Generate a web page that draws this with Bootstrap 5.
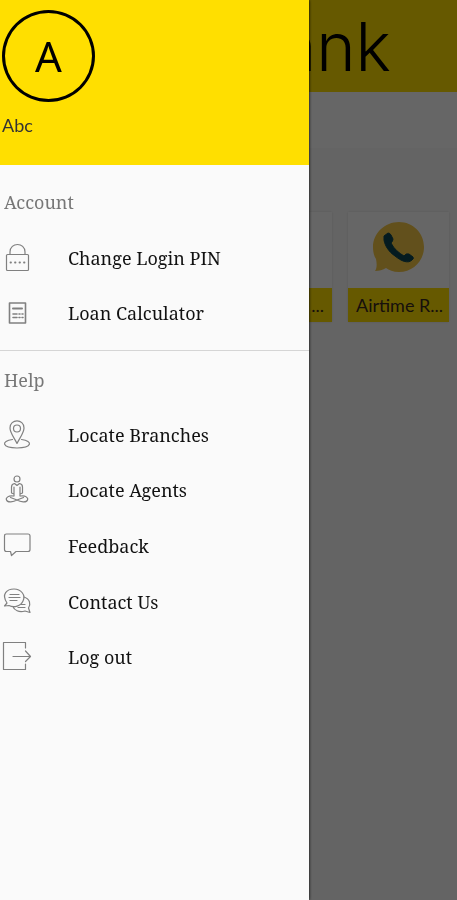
<!DOCTYPE html>
<html lang="en">
<head>
<meta charset="utf-8">
<meta name="viewport" content="width=device-width, initial-scale=1">
<title>Account menu</title>
<link href="https://cdn.jsdelivr.net/npm/bootstrap@5.3.0/dist/css/bootstrap.min.css" rel="stylesheet">
<style>
  body { background: #fafafa; font-family: Lato, "Open Sans", sans-serif; color: #000; }
  .brand-bar { background: #ffdf00; height: 92px; padding-right: 66px; }
  .brand-name { font: 300 67px/94px Inter, "Open Sans", sans-serif; }
  .strip { background: #fff; height: 56px; }
  .tiles { gap: 16px; padding: 64px 8px 0; }
  .tile { width: 101px; background: #fff; box-shadow: 0 0 2px #ddd; }
  .tile-art { height: 76px; padding-top: 9px; }
  .tile-label { background: #ffdf00; font-size: 18px; line-height: 34px; padding: 0 8px; color: #3a2a20; }
  .drawer.offcanvas { width: 309px; max-width: 80%; background: #fafafa; border: 0; box-shadow: 0 0 3px #000; color: #111; transition: none; }
  .offcanvas-backdrop.show { opacity: .6; transition: none; }
  .profile { background: #ffdf00; height: 165px; padding: 10px 2px 0; }
  .avatar { width: 93px; height: 92px; border: 3px solid #000; color: #000; font: 42px/1 "Noto Sans", sans-serif; }
  .user { font-size: 18px; line-height: 24px; margin-top: 11px; color: #333; }
  .group-title { font: 18px/28px "Noto Serif", "Liberation Serif", serif; color: #777; padding: 23px 4px 14px; margin: 0; }
  .group-title.second { padding-top: 15px; padding-bottom: 13px; }
  .entries { height: 278px; margin: 0; }
  .entries.short { height: 111px; margin-bottom: 9px; }
  .entry { font: 18px/28px "Noto Serif", "Liberation Serif", serif; color: #111; gap: 35px; padding-left: 1px; }
  .entry svg { width: 32px; height: 32px; fill: none; stroke: #808080; stroke-width: 1.2; stroke-linejoin: round; stroke-linecap: round; }
  .rule { border-top: 1px solid #d5d5d5; }
</style>
<script src="https://cdn.jsdelivr.net/npm/bootstrap@5.3.0/dist/js/bootstrap.bundle.min.js"></script>
</head>
<body class="min-vh-100 overflow-hidden">
<header class="brand-bar d-flex justify-content-end"><span class="brand-name">ank</span></header>
<div class="strip"></div>
<main class="tiles d-flex justify-content-end">
  <div class="tile"><div class="tile-art"></div><div class="tile-label text-end">...</div></div>
  <div class="tile">
    <div class="tile-art text-center">
      <svg width="54" height="54" viewBox="0 0 54 54" aria-hidden="true">
        <path d="M27 1C41 1 52 12 52 26S41 51 27 51C21 51 17 49 14 47C11 49 7 50 3 50C5 47 5 43 4 38C2 35 1 31 1 26C1 12 13 1 27 1Z" fill="#f5c847"/>
        <path d="M12 15L16 12Q18 12 19 14L21 18Q21 20 19 22C22 28 27 32 32 35Q34 32 37 33L41 36Q42 38 40 39C36 43 29 40 23 35C17 31 13 25 12 19Z" fill="#0b4550" stroke="#0b4550" stroke-linejoin="round"/>
      </svg>
    </div>
    <div class="tile-label text-center text-nowrap">Airtime R...</div>
  </div>
</main>
<aside class="drawer offcanvas offcanvas-start show" tabindex="-1" aria-label="Menu">
  <div class="profile">
    <div class="avatar rounded-circle d-flex align-items-center justify-content-center">A</div>
    <div class="user">Abc</div>
  </div>
  <nav>
    <h2 class="group-title">Account</h2>
    <ul class="entries short list-unstyled d-flex flex-column">
      <li class="flex-fill d-flex"><a class="entry d-flex align-items-center text-decoration-none w-100" href="#pin">
        <svg viewBox="0 0 32 32" aria-hidden="true"><rect x="5.500" y="12.500" width="22" height="16" rx="1"/><path d="M9 12V10C9 0 24 0 24 10V12"/><path d="M9.500 20.500H24" stroke-width="1.800" stroke-dasharray=".5 4"/></svg>Change Login PIN</a></li>
      <li class="flex-fill d-flex"><a class="entry d-flex align-items-center text-decoration-none w-100" href="#loan">
        <svg viewBox="0 0 32 32" aria-hidden="true"><rect x="8.500" y="6" width="16" height="20" stroke-width="1.600"/><path d="M12 11.500H21" stroke-width="2"/><path d="M12 17H16M18 17H19M21 17H22M12 20.500H16M18 20.500H19M21 20.500H22" stroke-width="1.600"/></svg>Loan Calculator</a></li>
    </ul>
    <div class="rule"></div>
    <h2 class="group-title second">Help</h2>
    <ul class="entries list-unstyled d-flex flex-column">
      <li class="flex-fill d-flex"><a class="entry d-flex align-items-center text-decoration-none w-100" href="#branches">
        <svg viewBox="0 0 32 32" aria-hidden="true"><path d="M16 24.500C13.500 19 9 14 9 9C9-.5 23-.5 23 9C23 14 18.500 19 16 24.500Z"/><circle cx="16" cy="9.500" r="3.500"/><path d="M11.500 20.500C-.5 22 1 29 16 29S32.500 22 20.500 20.500"/></svg>Locate Branches</a></li>
      <li class="flex-fill d-flex"><a class="entry d-flex align-items-center text-decoration-none w-100" href="#agents">
        <svg viewBox="0 0 32 32" aria-hidden="true"><circle cx="16" cy="5" r="3"/><path d="M13 22V20L10.500 19V13Q10.500 10 13.500 9.500L16 11.500L18.500 9.500Q21.500 10 21.500 13V19L19 20V22M13 13V20M19 13V20"/><path d="M12.500 22C7.500 21 4.500 24 5.500 26C6.500 29 12.500 28 16 26C19.500 28 25.500 29 26.500 26C27.500 24 24.500 21 19.500 22M9.500 23.500L16 26L22.500 23.500"/></svg>Locate Agents</a></li>
      <li class="flex-fill d-flex"><a class="entry d-flex align-items-center text-decoration-none w-100" href="#feedback">
        <svg viewBox="0 0 32 32" aria-hidden="true"><path d="M5.500 4H27Q29 4 29 6V19.500Q29 21.500 27 21.500H15L10.500 25.500L9.500 21.500H5.500Q3.500 21.500 3.500 19.500V6Q3.500 4 5.500 4Z"/></svg>Feedback</a></li>
      <li class="flex-fill d-flex"><a class="entry d-flex align-items-center text-decoration-none w-100" href="#contact">
        <svg viewBox="0 0 32 32" aria-hidden="true"><path d="M3.500 20L6 17C0 8 6 3 13 3S25 9 22 15C20 20 13 22 8 19.500Z"/><path d="M9 8.500H18M8 11.500H19M9 14.500H16"/><path d="M23 11C29 13 30 18 27.500 22L29 26.500L24 25C18 27 13 24 12 20.500M20 18.500H24M17 21.500H24"/></svg>Contact Us</a></li>
      <li class="flex-fill d-flex"><a class="entry d-flex align-items-center text-decoration-none w-100" href="#logout">
        <svg viewBox="0 0 32 32" aria-hidden="true"><path d="M24.500 7V1.500H2.500V28.500H24.500V23M12 15.500H29.500M24.500 10L29.500 15.500L24.500 20.500"/></svg>Log out</a></li>
    </ul>
  </nav>
</aside>
</body>
</html>
